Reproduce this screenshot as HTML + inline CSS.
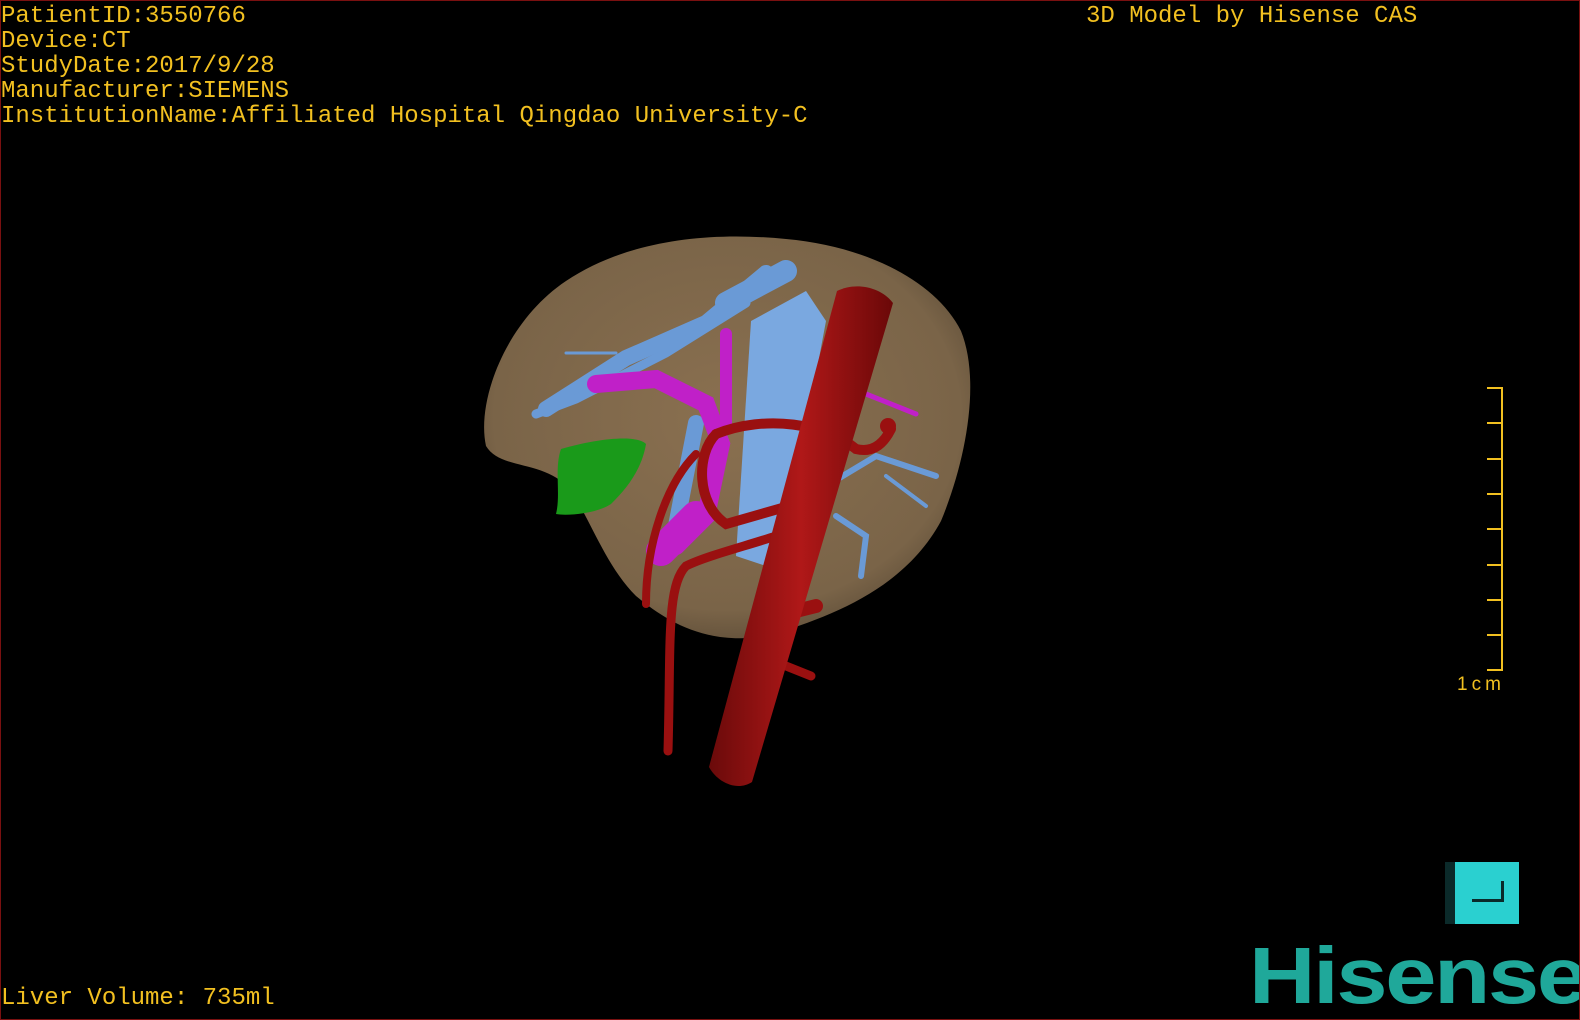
<!DOCTYPE html>
<html><head><meta charset="utf-8"><style>
html,body{margin:0;padding:0;background:#000;}
#c{position:relative;width:1580px;height:1020px;background:#000;overflow:hidden;box-sizing:border-box;border:1px solid #7a1010;}
.t{position:absolute;font-family:"Liberation Mono",monospace;font-size:24px;color:#f2c020;line-height:25px;white-space:pre;}
.k{position:absolute;left:1486px;width:15px;height:2px;background:#f2c020}
</style></head><body><div id="c">
<div class="t" style="left:0;top:3px">PatientID:3550766
Device:CT
StudyDate:2017/9/28
Manufacturer:SIEMENS
InstitutionName:Affiliated Hospital Qingdao University-C</div>
<div class="t" style="left:1085px;top:3px">3D Model by Hisense CAS</div>
<div class="t" style="left:0;top:985px">Liver Volume: 735ml</div>
<svg width="1580" height="1020" style="position:absolute;left:0;top:0">
<defs>
<radialGradient id="lv" cx="0.5" cy="0.45" r="0.6"><stop offset="0" stop-color="#8a7050"/><stop offset="0.8" stop-color="#7a6448"/><stop offset="1" stop-color="#5a4a36"/></radialGradient>
<linearGradient id="ao" x1="0" x2="1"><stop offset="0" stop-color="#6a0a0a"/><stop offset="0.5" stop-color="#b01818"/><stop offset="1" stop-color="#6a0808"/></linearGradient>
</defs>
<path d="M485,445 C475,400 505,320 565,280 C625,240 705,230 785,238 C865,245 935,280 960,330 C980,380 965,460 940,520 C905,585 835,615 765,635 C705,645 665,620 635,595 C605,565 590,520 570,490 C545,458 500,470 485,445 Z" fill="url(#lv)"/>
<path d="M750,320 L805,290 L825,320 L795,480 L765,565 L735,555 Z" fill="#7aa8e0"/>
<g stroke="#6a9ad6" stroke-linecap="round" fill="none">
<path d="M765,272 L705,322 L625,357 L545,408" stroke-width="16"/>
<path d="M745,302 L665,352 L575,398 L535,413" stroke-width="9"/>
<path d="M785,270 L725,302" stroke-width="22"/>
<path d="M695,422 L675,525" stroke-width="16"/>
<path d="M825,485 L875,455 L935,475" stroke-width="6"/>
<path d="M835,515 L865,535 L860,575" stroke-width="6"/>
<path d="M885,475 L925,505" stroke-width="4"/>
<path d="M565,352 L615,352" stroke-width="3"/>
<path d="M585,383 L625,383" stroke-width="3"/>
</g>
<path d="M560,448 C595,438 635,433 645,443 C640,473 620,493 610,503 C595,513 565,515 555,513 C560,493 553,468 560,448 Z" fill="#1a9a1a"/>
<g stroke="#c020c8" stroke-linecap="round" fill="none">
<path d="M595,383 L655,378 L705,403 L720,443 L705,515 L675,545" stroke-width="18"/>
<path d="M725,333 L725,423" stroke-width="12"/>
<path d="M695,515 L660,550" stroke-width="30"/>
<path d="M865,393 L915,413" stroke-width="5"/>
</g>
<g stroke="#9a1010" stroke-linecap="round" fill="none">
<path d="M715,433 C765,413 825,423 855,448 C875,453 885,438 890,428" stroke-width="10"/>
<path d="M715,433 C695,453 695,503 725,523 L795,503" stroke-width="10"/>
<path d="M695,453 C665,483 645,543 645,603" stroke-width="8"/>
<path d="M775,535 C745,545 705,555 685,565 C665,585 670,645 667,750" stroke-width="9"/>
<path d="M775,615 L815,605" stroke-width="14"/>
<path d="M785,665 L810,675" stroke-width="9"/>
</g>
<circle cx="887" cy="425" r="8" fill="#9a1010"/>
<path d="M836,290 C856,280 881,287 892,302 L751,781 C736,791 716,781 708,766 Z" fill="url(#ao)"/>
</svg>
<div style="position:absolute;left:1500px;top:386px;width:2px;height:284px;background:#f2c020"></div>
<div class="k" style="top:386px"></div><div class="k" style="top:421px"></div><div class="k" style="top:457px"></div>
<div class="k" style="top:492px"></div><div class="k" style="top:527px"></div><div class="k" style="top:563px"></div>
<div class="k" style="top:598px"></div><div class="k" style="top:633px"></div><div class="k" style="top:668px"></div>
<div style="position:absolute;left:1456px;top:673px;font-family:'Liberation Sans',sans-serif;font-size:19px;color:#f2c020;letter-spacing:4px">1cm</div>
<div style="position:absolute;left:1444px;top:861px;width:10px;height:62px;background:#0b2a2a"></div>
<div style="position:absolute;left:1454px;top:861px;width:64px;height:62px;background:#2ad0d0"></div>
<div style="position:absolute;left:1471px;top:898px;width:32px;height:3px;background:#0a2a2a"></div>
<div style="position:absolute;left:1500px;top:880px;width:3px;height:21px;background:#0a2a2a"></div>
<div style="position:absolute;left:1248px;top:935px;font-family:'Liberation Sans',sans-serif;font-weight:bold;font-size:80px;color:#1fa89a;letter-spacing:-2px;line-height:80px;transform-origin:0 0;transform:scaleX(1.15)">Hisense</div>
</div></body></html>
